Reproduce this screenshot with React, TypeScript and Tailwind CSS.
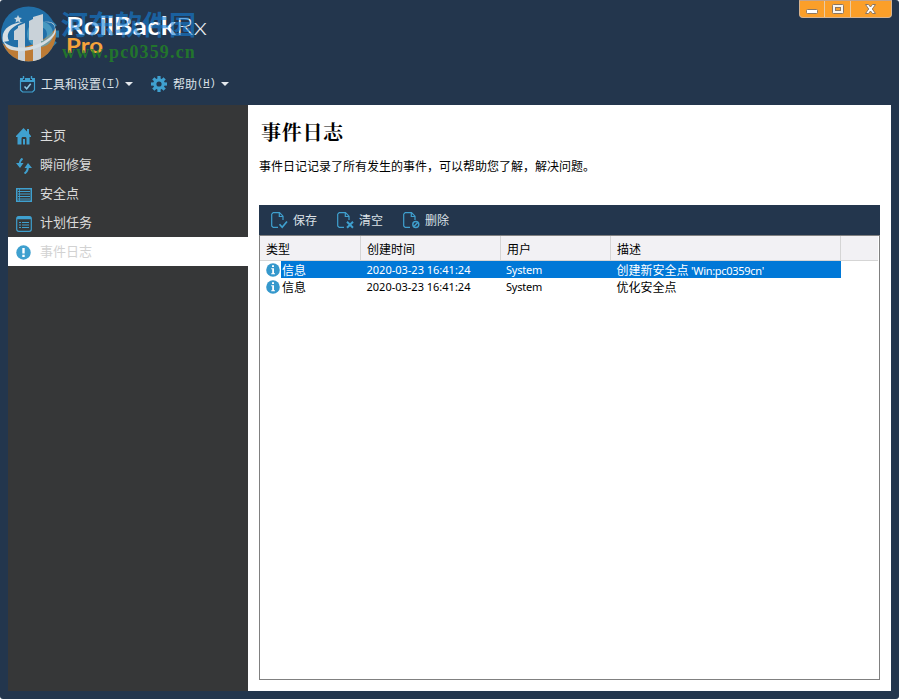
import type { ReactNode } from 'react';
import { clsx } from 'clsx';

const BLUE = '#3fa0cf';

const events = [
  { id: 1, type: '信息', time: '2020-03-23 16:41:24', user: 'System', text: '创建新安全点', extra: " 'Win:pc0359cn'" },
  { id: 2, type: '信息', time: '2020-03-23 16:41:24', user: 'System', text: '优化安全点', extra: '' },
];

function CalendarIcon() {
  return (
    <svg width="17" height="17" viewBox="0 0 17 17" fill="none" stroke={BLUE}>
      <path d="M1 2h3v2h2V2h5v2h2V2h3v4H1z" fill={BLUE} stroke="none" />
      <path d="M4.5 0v3M12.5 0v3" strokeWidth="1.4" />
      <path d="M1.5 4v10l2 2h10l2-2V4" strokeWidth="1.2" />
      <path d="M5.5 10.5l2.2 2.3 4-5" stroke="#8cc8e6" strokeWidth="1.5" />
    </svg>
  );
}

const teeth = [0, 45, 90, 135, 180, 225, 270, 315];

function GearIcon() {
  return (
    <svg width="16" height="16" viewBox="0 0 16 16">
      {teeth.map((angle) => (
        <rect key={angle} x="6.4" y="0" width="3.2" height="4" fill={BLUE} transform={`rotate(${angle} 8 8)`} />
      ))}
      <circle cx="8" cy="8" r="4.2" fill="none" stroke={BLUE} strokeWidth="3.2" />
    </svg>
  );
}

function HomeIcon() {
  return (
    <svg width="16" height="17" viewBox="0 0 16 17" fill={BLUE}>
      <path d="M7.5 0 11 3.5V1h2v4.5L15 8v1h-1.5v7.5h-3v-6a2 2 0 0 0-1-1.5h-3a2 2 0 0 0-1 1.5v6h-4V9H0V8z" />
      <rect x="7" y="11" width="2" height="5.5" />
    </svg>
  );
}

function RestoreIcon() {
  return (
    <svg width="16" height="16" viewBox="0 0 16 16" fill="none" stroke={BLUE} strokeWidth="2">
      <path d="M6.5 0.5C4.5 2 3.7 4 3.7 7M12 8c0 4-1 6-3.5 7.5" />
      <path d="M0 5h7.5L4 10zM8.5 10H16L12 5z" fill={BLUE} stroke="none" />
    </svg>
  );
}

function SnapshotIcon() {
  return (
    <svg width="16" height="14" viewBox="0 0 16 14" stroke={BLUE} fill="none">
      <path d="M.75.75h14.5v12.5H.75z" strokeWidth="1.5" />
      <path d="M3.5 1v12" strokeWidth=".8" />
      <path d="M2 3.5h12M2 6h12M2 8.5h12M2 11h12" />
    </svg>
  );
}

function ScheduleIcon() {
  return (
    <svg width="16" height="16" viewBox="0 0 16 16" stroke={BLUE} fill="none">
      <rect x=".7" y=".7" width="14.6" height="14.6" rx="2" strokeWidth="1.2" />
      <path d="M1 2h14" strokeWidth="2.4" />
      <path d="M3 6.5h2M6 6.5h7M3 9h2M6 9h7M3 11.5h2M6 11.5h7" strokeWidth="1.2" />
    </svg>
  );
}

function AlertIcon() {
  return (
    <svg width="15" height="15" viewBox="0 0 15 15">
      <circle cx="7.5" cy="7.5" r="7.2" fill={BLUE} />
      <path d="M6.3 3h2.4v5.5H6.3zM6.3 9.8h2.4V12H6.3z" fill="#fff" />
    </svg>
  );
}

function InfoIcon() {
  return (
    <svg className="shrink-0" width="14" height="14" viewBox="0 0 14 14">
      <circle cx="7" cy="7" r="6.8" fill="#3598cc" />
      <path d="M6 2.3h2v1.8H6zM5.2 5.2H8v5h1v1H5.2v-1h1v-4h-1z" fill="#fff" />
    </svg>
  );
}

function PageIcon({ children }: { children: ReactNode }) {
  return (
    <svg width="17" height="17" viewBox="0 0 17 17" fill="none" stroke={BLUE} strokeWidth="1.2">
      <path d="M7 15.4H2.2L.7 14V2.2L2.2.7h6.3L12 4.2V8" />
      <path d="M8.3 1v3.5H12" />
      {children}
    </svg>
  );
}

const nav = [
  { label: '主页', icon: <HomeIcon /> },
  { label: '瞬间修复', icon: <RestoreIcon /> },
  { label: '安全点', icon: <SnapshotIcon /> },
  { label: '计划任务', icon: <ScheduleIcon /> },
  { label: '事件日志', icon: <AlertIcon />, active: true },
];

const tools = [
  { label: '保存', icon: <PageIcon><path d="M8.5 12.3l2.7 3L16 9.5" strokeWidth="1.7" /></PageIcon> },
  { label: '清空', icon: <PageIcon><path d="M10 9.8l6 6M16 9.8l-6 6" strokeWidth="2" /></PageIcon> },
  {
    label: '删除',
    icon: <PageIcon><circle cx="12.8" cy="12.5" r="3" strokeWidth="1.4" /><path d="M10.8 14.5l4-4" strokeWidth="1.4" /></PageIcon>,
  },
];

function Logo() {
  return (
    <svg className="absolute left-0 top-0" width="62" height="66" viewBox="0 0 62 66">
      <defs>
        <clipPath id="disc"><circle cx="28.5" cy="34" r="27.5" /></clipPath>
      </defs>
      <g fill="#3080ad">
        {teeth.map((angle) => (
          <rect key={angle} x="39.5" y="18" width="7" height="9" transform={`rotate(${angle} 43 34)`} />
        ))}
        <circle cx="43" cy="34" r="12" />
      </g>
      <g clipPath="url(#disc)">
        <rect width="58" height="66" fill="#216fa8" />
        <path d="M0 41q10 10 28 5 18-5 29-19v40H0z" fill="#bd7b35" />
        <circle cx="40" cy="34" r="10" fill="none" stroke="#58a9cb" strokeWidth="6" opacity=".7" />
        <path d="M14 31l4-3v-2l7-3v39h-7V40h-4zM29 21l4-2v-2l10-3v27h-2v21h-8V40h-4z" fill="#c9d2d9" />
        <path d="M44 22c13-1 14 9 5 16-13 10-35 14-46 3 2 4 4 8 9 9 14 4 33-3 41-13 7-9 2-17-9-15z" fill="#d5dee3" />
        <path d="M3 42C0 29 11 23 23 22 11 27 5 33 9 41z" fill="#d5dee3" />
      </g>
      <path d="M18 15l1.2 2.6 2.8.3-2.1 1.9.6 2.8-2.5-1.4-2.5 1.4.6-2.8-2.1-1.9 2.8-.3z" fill="#c5d5df" />
    </svg>
  );
}

function Brand() {
  return (
    <div className="relative h-[70px] w-[260px] whitespace-nowrap">
      <Logo />
      <svg className="absolute left-0 top-0" width="260" height="66" fontFamily="Lato, sans-serif">
        <text x="66" y="35" fontSize="24" fontWeight="700" fill="#fff" textLength="110" lengthAdjust="spacingAndGlyphs">RollBack</text>
        <text x="176" y="35" fontSize="24" fontWeight="300" fill="#e8edf2" textLength="31" lengthAdjust="spacingAndGlyphs">Rx</text>
        <text x="66" y="53" fontSize="20" fontWeight="700" fill="#f5a33b" textLength="37" lengthAdjust="spacingAndGlyphs">Pro</text>
      </svg>
      <span className="absolute left-[61px] top-[7px] text-[27px] leading-[34px] font-bold text-[#1480d8]/60">河东软件园</span>
      <span className="absolute left-[62px] top-[42px] font-['Liberation_Serif'] text-[18px] leading-[20px] font-bold tracking-[1.15px] text-[#228a22]/75">
        www.pc0359.cn
      </span>
    </div>
  );
}

function WindowButtons() {
  return (
    <div className="absolute right-[7px] top-0 flex h-[18px] rounded-b-[4px] border border-t-[#c2a38a] border-[#d8b48f] bg-[#fb9f29]">
      <div className="flex w-[25px] items-center justify-center border-r border-[#e9cba4]">
        <svg width="13" height="12" viewBox="0 0 13 12">
          <rect x=".5" y="6.5" width="11" height="4" rx="1" fill="#fff" stroke="#8d7760" />
        </svg>
      </div>
      <div className="flex w-[26px] items-center justify-center border-r border-[#e9cba4]">
        <svg width="12" height="10" viewBox="0 0 12 10">
          <rect x=".5" y=".5" width="11" height="9" rx="1" fill="#f8f4ee" stroke="#8d7760" />
          <rect x="3.5" y="3.5" width="5" height="3" fill="#fb9f29" stroke="#8d7760" />
        </svg>
      </div>
      <div className="flex w-[40px] items-center justify-center pr-[2px]">
        <svg width="11" height="10" viewBox="0 0 11 10">
          <path d="M.5.5h3l2 2.5 2-2.5h3L7.3 5l3.2 4.5h-3l-2-2.5-2 2.5h-3L3.7 5z" fill="#fff" stroke="#8d7760" />
        </svg>
      </div>
    </div>
  );
}

function MenuButton({ icon, label, hotkey }: { icon: ReactNode; label: string; hotkey: string }) {
  return (
    <div className="flex items-center">
      <span className="flex w-[22px]">{icon}</span>
      <span>{label}</span>
      <span className="font-['Liberation_Mono'] text-[10.5px]">(<u>{hotkey}</u>)</span>
      <svg className="ml-[5px]" width="8" height="4" viewBox="0 0 8 4" fill="#e5e9ee">
        <path d="M0 0h8L4 4z" />
      </svg>
    </div>
  );
}

export default function App() {
  return (
    <div className="relative flex h-[699px] w-[899px] flex-col overflow-hidden rounded-[3px] bg-[#23364d] font-['Noto_Sans_CJK_SC',sans-serif] text-[12px]">
      <WindowButtons />
      <header className="h-[105px] shrink-0">
        <Brand />
        <div className="flex h-[28px] items-center gap-[18px] pl-[19px] text-[12px] text-[#dce2e8]">
          <MenuButton icon={<CalendarIcon />} label="工具和设置" hotkey="T" />
          <MenuButton icon={<GearIcon />} label="帮助" hotkey="H" />
        </div>
      </header>

      <div className="mx-[8px] mb-[8px] flex flex-1">
        <nav className="w-[240px] shrink-0 bg-[#363738] pt-[16px]">
          {nav.map((item) => (
            <div
              key={item.label}
              className={clsx(
                'flex h-[29px] items-center pl-[8px] text-[13px]',
                item.active ? 'bg-white text-[#d2d2d2]' : 'text-[#dcdcdc]'
              )}
            >
              <span className="flex w-[24px] pt-[2px]">{item.icon}</span>
              <span className="pb-[2px]">{item.label}</span>
            </div>
          ))}
        </nav>

        <main className="flex flex-1 flex-col bg-white pr-[11px] pb-[11px] pl-[11px] text-black">
          <h1 className="mt-[14px] pl-[2px] font-['Noto_Serif_CJK_SC','Noto_Sans_CJK_SC',serif] text-[20px] leading-[26px] font-bold tracking-[0.7px]">
            事件日志
          </h1>
          <p className="mt-[12px] leading-[18px]">事件日记记录了所有发生的事件，可以帮助您了解，解决问题。</p>

          <div className="mt-[30px] flex h-[30px] shrink-0 items-center bg-[#23364d] pl-[12px] text-[#dce2e8]">
            {tools.map((tool) => (
              <div key={tool.label} className="flex w-[66px] items-center">
                <span className="flex w-[22px]">{tool.icon}</span>
                <span>{tool.label}</span>
              </div>
            ))}
          </div>

          <div className="flex-1 border border-[#808080] pr-px">
            <div className="grid h-[25px] grid-cols-[101px_140px_110px_230px_1fr] border-b border-[#d5d5d5] bg-[#f2f1f4] leading-[26px]">
              {['类型', '创建时间', '用户', '描述'].map((name) => (
                <div key={name} className="border-r border-[#d5d5d5] pl-[6px]">{name}</div>
              ))}
            </div>
            {events.map((event, i) => (
              <div
                key={event.id}
                className={clsx(
                  'grid h-[17px] grid-cols-[101px_140px_110px_230px] leading-[17px] *:h-[17px]',
                  i === 0 && 'text-white *:not-first:bg-[#0078d7]'
                )}
              >
                <div className="flex items-center pl-[6px]">
                  <InfoIcon />
                  <span className={clsx('ml-px h-[17px] flex-1 pl-px', i === 0 && 'bg-[#0078d7]')}>{event.type}</span>
                </div>
                <div className="pl-[5.5px] font-['Noto_Sans'] text-[11px]">{event.time}</div>
                <div className="pl-[5px] font-['Noto_Sans'] text-[11px] tracking-[-0.2px]">{event.user}</div>
                <div className="pl-[5.5px] whitespace-pre">
                  {event.text}
                  <span className="font-['Noto_Sans'] text-[11px] tracking-[-0.3px]">{event.extra}</span>
                </div>
              </div>
            ))}
          </div>
        </main>
      </div>
    </div>
  );
}
